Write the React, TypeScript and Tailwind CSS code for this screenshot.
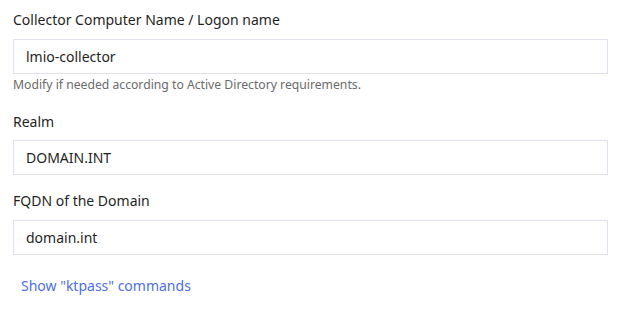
export default function App() {
  return (
    <div className="w-[620px] h-[311px] bg-white px-[13px] pt-[10px] font-['Noto_Sans',sans-serif] text-[#1f1f1f]">
      <label className="block text-[14px] leading-[20px]">Collector Computer Name / Logon name</label>
      <div className="mt-[9px] h-[35px] w-[595px] border border-[#dfe1f0] px-[12px] flex items-center text-[14px]">
        lmio-collector
      </div>
      <p className="mt-[3px] text-[12.2px] leading-[16px] text-[#6b6b6b]">
        Modify if needed according to Active Directory requirements.
      </p>

      <label className="mt-[19px] block text-[14px] leading-[20px]">Realm</label>
      <div className="mt-[8px] h-[35px] w-[595px] border border-[#dfe1f0] px-[12px] flex items-center text-[14px]">
        DOMAIN.INT
      </div>

      <label className="mt-[16px] block text-[14px] leading-[20px]">FQDN of the Domain</label>
      <div className="mt-[9px] h-[35px] w-[595px] border border-[#dfe1f0] px-[12px] flex items-center text-[14px]">
        domain.int
      </div>

      <button className="mt-[21px] px-[8px] text-[14px] leading-[20px] text-[#4d6fe3]">
        Show "ktpass" commands
      </button>
    </div>
  )
}
